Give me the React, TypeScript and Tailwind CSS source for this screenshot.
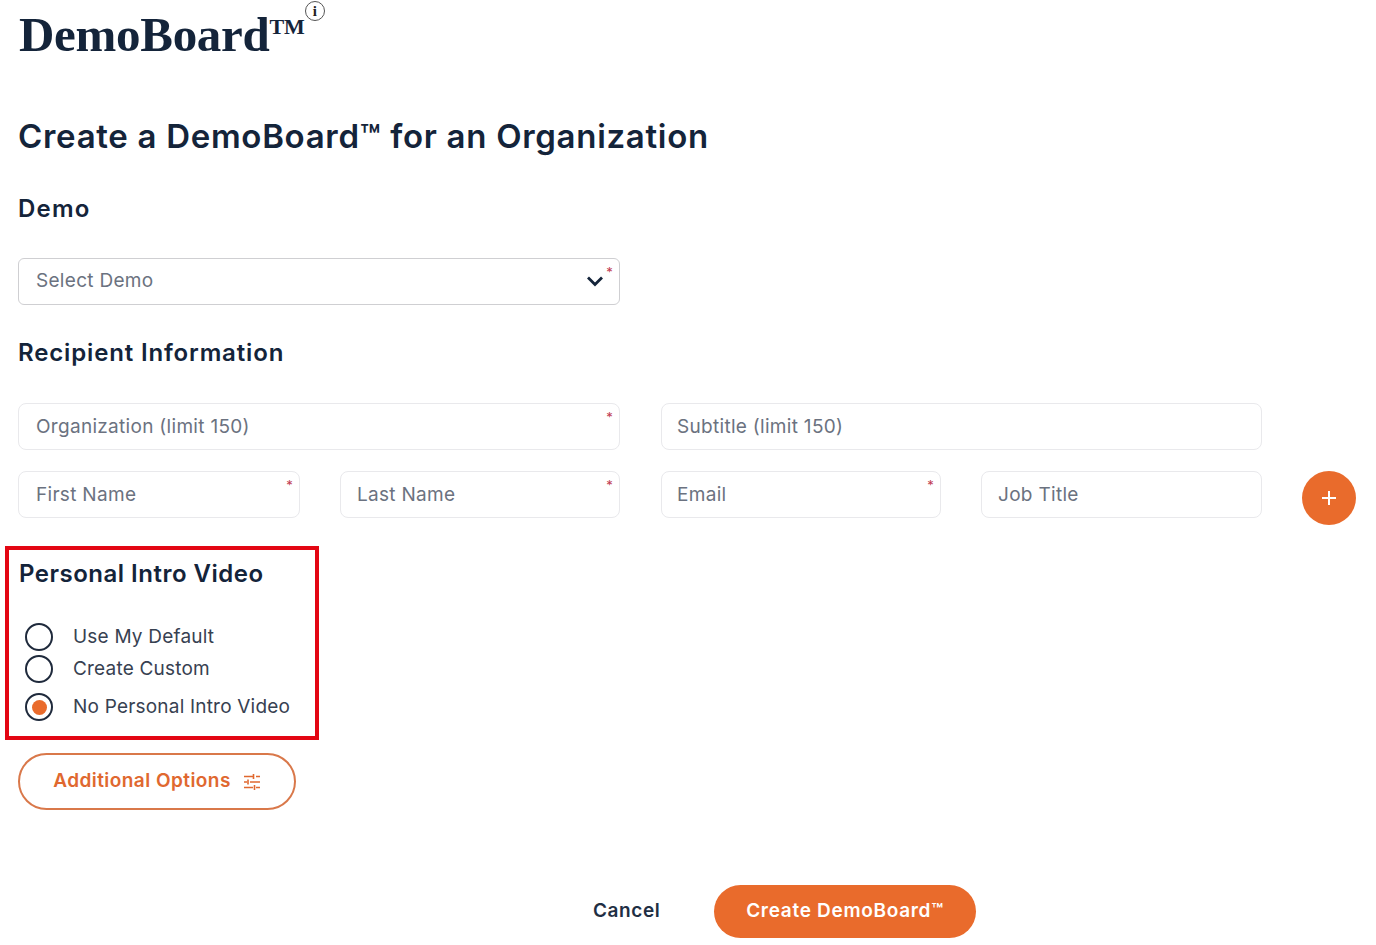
import React from "react";

const Req = ({ className = "right-[6px] top-[7px]" }: { className?: string }) => (
  <span className={`absolute ${className} text-[13px] leading-none text-[#c0394f] font-['Inter',sans-serif]`}>*</span>
);

const Field = ({ label, req, className = "" }: { label: string; req?: boolean; className?: string }) => (
  <div className={`relative h-[47px] rounded-[8px] border border-[#e9e9ec] bg-white flex items-center pt-[1px] text-[19px] tracking-[0.3px] text-[#6b7280] ${className}`}>
    <span>{label}</span>
    {req && <Req />}
  </div>
);

const Radio = ({ label, checked, className = "" }: { label: string; checked?: boolean; className?: string }) => (
  <div className={`flex items-center h-[28px] ${className}`}>
    <span className="ml-[6px] w-[28px] h-[28px] rounded-full border-2 border-[#1f2a3c] flex items-center justify-center shrink-0">
      {checked && <span className="w-[15px] h-[15px] rounded-full bg-[#e96b2c]" />}
    </span>
    <span className="ml-[20px] text-[19px] tracking-[0.2px] text-[#374151] whitespace-nowrap">{label}</span>
  </div>
);

export default function App() {
  return (
    <div className="relative w-[1376px] h-[945px] overflow-hidden bg-white pl-[18px] text-[#14243a] font-['Inter','Liberation_Sans',sans-serif]">
      <div className="flex h-[64px] items-start pl-[1px]">
        <span className="font-['Liberation_Serif',serif] font-bold text-[49px] leading-[70px] text-[#14243a] tracking-[-0.3px]">
          DemoBoard
        </span>
        <span className="font-['Liberation_Serif',serif] font-bold text-[22px] leading-[54px] text-[#14243a]">TM</span>
        <span className="mt-[1px] w-[20px] h-[20px] rounded-full border border-[#555] flex items-center justify-center font-['Liberation_Serif',serif] font-bold text-[15px] leading-none text-[#222]">
          i
        </span>
      </div>

      <h1 className="mt-[49px] text-[33px] leading-[46px] font-semibold text-[#14243a] whitespace-nowrap tracking-[0.7px]">
        Create a DemoBoard™ for an Organization
      </h1>

      <h2 className="mt-[33px] text-[24px] leading-[34px] font-semibold tracking-[1.2px]">Demo</h2>

      <div className="relative mt-[32px] w-[602px] h-[47px] rounded-[6px] border border-[#cfcfd2] flex items-center pl-[17px] text-[19px] tracking-[0.3px] text-[#6b7280]">
        <span>Select Demo</span>
        <svg className="absolute right-[15px] top-[16px]" width="18" height="12" viewBox="0 0 18 12" fill="none">
          <path d="M2 2.5 9 9.5 16 2.5" stroke="#14243a" strokeWidth="2.8" />
        </svg>
        <Req className="right-[6px] top-[7px]" />
      </div>

      <h2 className="mt-[31px] text-[24px] leading-[34px] font-semibold tracking-[0.85px]">Recipient Information</h2>

      <div className="mt-[33px] w-[1244px] grid grid-cols-4 gap-x-[40px] gap-y-[21px]">
        <Field label="Organization (limit 150)" req className="col-span-2 pl-[17px]" />
        <Field label="Subtitle (limit 150)" className="col-span-2 ml-[1px] pl-[15px]" />
        <Field label="First Name" req className="-mr-[1px] pl-[17px]" />
        <Field label="Last Name" req className="ml-[1px] pl-[16px]" />
        <Field label="Email" req className="ml-[1px] pl-[15px]" />
        <Field label="Job Title" className="pl-[16px]" />
      </div>

      <button className="absolute left-[1302px] top-[471px] w-[54px] h-[54px] rounded-full bg-[#e96b2c] flex items-center justify-center">
        <svg width="18" height="18" viewBox="0 0 18 18" fill="none">
          <path d="M9 2v14M2 9h14" stroke="#fff" strokeWidth="2" />
        </svg>
      </button>

      <section className="mt-[28px] -ml-[13px] w-[314px] h-[194px] border-[4px] border-[#e30613] pl-[10px] pt-[7px]">
        <h2 className="text-[24px] leading-[34px] font-semibold tracking-[0.5px]">Personal Intro Video</h2>
        <Radio label="Use My Default" className="mt-[32px]" />
        <Radio label="Create Custom" className="mt-[4px]" />
        <Radio label="No Personal Intro Video" checked className="mt-[10px]" />
      </section>

      <button className="mt-[13px] w-[278px] h-[57px] rounded-full border-2 border-[#d9784a] flex items-center justify-center gap-[13px] text-[19px] tracking-[0.45px] font-semibold text-[#e0682f]">
        <span>Additional Options</span>
        <svg className="-ml-[1px]" width="18" height="18" viewBox="0 0 18 18" fill="none" stroke="#e0682f" strokeWidth="1.6">
          <path d="M1 3.5h9M13 3.5h4M10.5 1v5M1 9h3M7 9h10M5 6.5v5M1 14.5h9M13 14.5h4M11.5 12v5" />
        </svg>
      </button>

      <div className="mt-[75px] flex items-center pl-[575px]">
        <span className="text-[19px] tracking-[0.6px] font-semibold text-[#1f2f44] w-[121px]">Cancel</span>
        <button className="w-[262px] h-[53px] rounded-full bg-[#e96b2c] text-white text-[19px] tracking-[0.7px] font-semibold">
          Create DemoBoard™
        </button>
      </div>
    </div>
  );
}
